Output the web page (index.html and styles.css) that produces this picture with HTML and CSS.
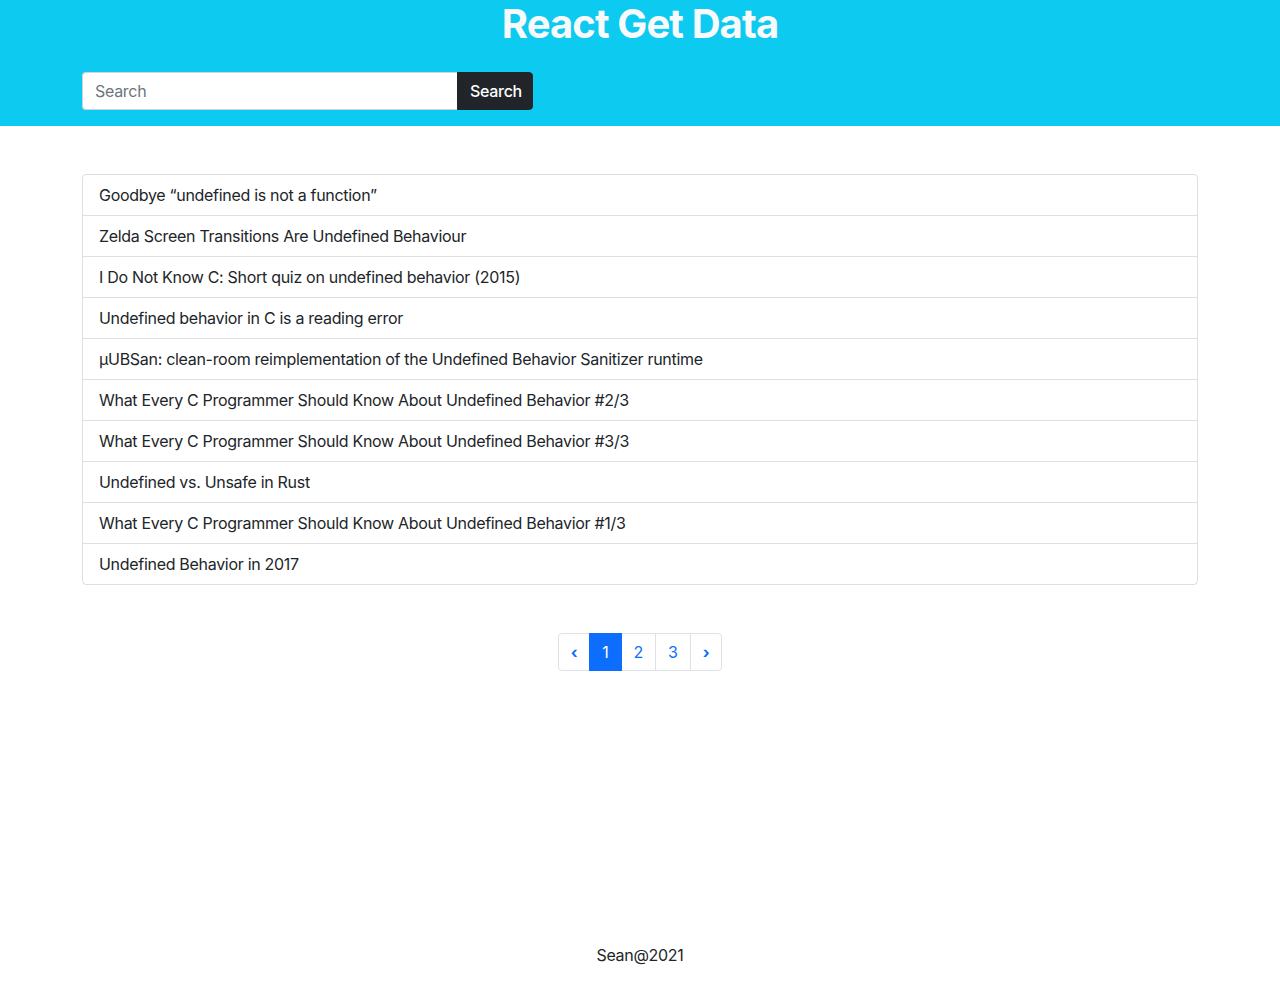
FILE: index.html
```html
<!DOCTYPE html>
<html lang="en">
<head>
<meta charset="utf-8">
<title>React Get Data</title>
<link rel="stylesheet" href="styles.css">
</head>
<body>
<div class="app">
  <header class="header">
    <h1 class="title">React Get Data</h1>
    <div class="container">
      <form class="search-group">
        <input class="search-input" type="text" placeholder="Search">
        <button class="search-btn" type="button">Search</button>
      </form>
    </div>
  </header>
  <main class="main container">
    <ul class="list">
      <li class="list-item">Goodbye “undefined is not a function”</li>
      <li class="list-item">Zelda Screen Transitions Are Undefined Behaviour</li>
      <li class="list-item">I Do Not Know C: Short quiz on undefined behavior (2015)</li>
      <li class="list-item">Undefined behavior in C is a reading error</li>
      <li class="list-item">µUBSan: clean-room reimplementation of the Undefined Behavior Sanitizer runtime</li>
      <li class="list-item">What Every C Programmer Should Know About Undefined Behavior #2/3</li>
      <li class="list-item">What Every C Programmer Should Know About Undefined Behavior #3/3</li>
      <li class="list-item">Undefined vs. Unsafe in Rust</li>
      <li class="list-item">What Every C Programmer Should Know About Undefined Behavior #1/3</li>
      <li class="list-item">Undefined Behavior in 2017</li>
    </ul>
    <nav class="pager">
      <ul class="pagination">
        <li class="page-item"><a class="page-link arrow" href="#">‹</a></li>
        <li class="page-item active"><a class="page-link" href="#">1</a></li>
        <li class="page-item"><a class="page-link" href="#">2</a></li>
        <li class="page-item"><a class="page-link" href="#">3</a></li>
        <li class="page-item"><a class="page-link arrow" href="#">›</a></li>
      </ul>
    </nav>
  </main>
  <footer class="footer">Sean@2021</footer>
</div>
</body>
</html>
```
FILE: styles.css
```css
* { box-sizing: border-box; }
html, body { margin: 0; padding: 0; }
body {
  font-family: Inter, "Noto Sans", "Liberation Sans", sans-serif;
  font-size: 16px;
  line-height: 1.5;
  letter-spacing: -0.3px;
  color: #212529;
  background: #fff;
}
.app {
  min-height: 100vh;
  display: flex;
  flex-direction: column;
}
.container {
  width: 1140px;
  margin: 0 auto;
  padding: 0 12px;
}
.header {
  background: #0dcaf0;
  padding-bottom: 16px;
}
.title {
  margin: 0 0 24px;
  text-align: center;
  color: #f8f9fa;
  font-size: 40px;
  line-height: 48px;
  font-weight: 700;
  letter-spacing: -0.9px;
}
.search-group {
  display: flex;
  width: 451px;
  margin: 0;
}
.search-input {
  flex: 1;
  min-width: 0;
  height: 38px;
  padding: 6px 12px;
  font: inherit;
  font-size: 16px;
  letter-spacing: -0.3px;
  color: #212529;
  background: #fff;
  border: 1px solid #ced4da;
  border-right: 0;
  border-radius: 4px 0 0 4px;
  outline: none;
}
.search-input::placeholder { color: #6c757d; }
.search-btn {
  height: 38px;
  width: 76px;
  padding: 0 12px;
  font: inherit;
  font-size: 16px;
  font-weight: 500;
  letter-spacing: -0.3px;
  color: #fff;
  background: #212529;
  border: 1px solid #212529;
  border-radius: 0 4px 4px 0;
}
.main {
  flex: 1;
  padding-top: 48px;
}
.list {
  list-style: none;
  margin: 0;
  padding: 0;
  border: 1px solid rgba(0,0,0,.125);
  border-radius: 4px;
}
.list-item {
  padding: 8px 16px;
  line-height: 24px;
  border-top: 1px solid rgba(0,0,0,.125);
}
.list-item:first-child { border-top: 0; }
.pager {
  display: flex;
  justify-content: center;
  margin-top: 48px;
}
.pagination {
  display: flex;
  list-style: none;
  margin: 0;
  padding: 0;
}
.page-link {
  display: block;
  padding: 6px 12px;
  line-height: 24px;
  color: #0d6efd;
  text-decoration: none;
  background: #fff;
  border: 1px solid #dee2e6;
  margin-left: -1px;
}
.page-link.arrow { font-weight: 700; }
.page-item:first-child .page-link { margin-left: 0; border-radius: 4px 0 0 4px; }
.page-item:last-child .page-link { border-radius: 0 4px 4px 0; }
.page-item.active .page-link {
  position: relative;
  z-index: 1;
  color: #fff;
  background: #0d6efd;
  border-color: #0d6efd;
}
.footer {
  text-align: center;
  padding: 16px 0;
  line-height: 24px;
}
```
